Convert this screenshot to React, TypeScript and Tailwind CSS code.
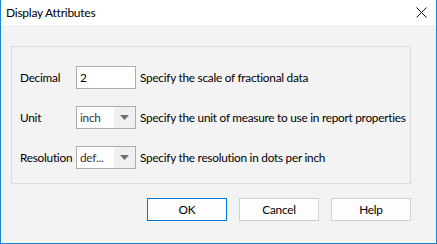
import { ReactNode } from "react";

function Row({ label, children, desc }: { label: string; children: ReactNode; desc: string }) {
  return (
    <div className="flex items-center h-[23px]">
      <div className="w-[56px] shrink-0 whitespace-nowrap">{label}</div>
      {children}
      <div className="ml-[4px] whitespace-nowrap">{desc}</div>
    </div>
  );
}

function Combo({ value }: { value: string }) {
  return (
    <div className="flex w-[60px] h-[23px] border border-[#adadad] bg-white shrink-0">
      <div className="flex-1 pl-[3px] leading-[21px] text-[#333]">{value}</div>
      <div className="w-[21px] bg-[#f0f0f0] flex items-center justify-center">
        <svg width="9" height="5" viewBox="0 0 9 5">
          <path d="M0 0h9L4.5 5z" fill="#6d6d6d" />
        </svg>
      </div>
    </div>
  );
}

function Btn({ label, primary }: { label: string; primary?: boolean }) {
  return (
    <button
      className={
        "w-[80px] h-[23px] bg-[#fdfdfd] text-black " +
        (primary ? "border border-[#0078d7]" : "border border-[#d0d0d0]")
      }
    >
      {label}
    </button>
  );
}

export default function App() {
  return (
    <div
      className="w-[437px] h-[244px] bg-[#f3f3f3] border-x border-b border-[#1883d7] flex flex-col text-[11.8px] tracking-[-0.25px] text-black"
      style={{ fontFamily: '"Segoe UI", Lato, sans-serif' }}
    >
      <div className="h-[25px] bg-white flex items-center justify-between pl-[5px] pr-[9px]">
        <span className="text-[12px]">Display Attributes</span>
        <svg width="11" height="11" viewBox="0 0 11 11">
          <path d="M0.5 0.5l10 10M10.5 0.5l-10 10" stroke="#111" strokeWidth="1" />
        </svg>
      </div>
      <div className="ml-[10px] mt-[21px] w-[400px] h-[138px] border border-[#dcdcdc] pl-[8px] pt-[19px] flex flex-col gap-[17px]">
        <Row label="Decimal" desc="Specify the scale of fractional data">
          <div className="w-[60px] h-[23px] border border-[#adadad] bg-white pl-[3px] leading-[21px] shrink-0">2</div>
        </Row>
        <Row label="Unit" desc="Specify the unit of measure to use in report properties">
          <Combo value="inch" />
        </Row>
        <Row label="Resolution" desc="Specify the resolution in dots per inch">
          <Combo value="def..." />
        </Row>
      </div>
      <div className="mt-[14px] ml-[146px] flex gap-[12px]">
        <Btn label="OK" primary />
        <Btn label="Cancel" />
        <Btn label="Help" />
      </div>
    </div>
  );
}
